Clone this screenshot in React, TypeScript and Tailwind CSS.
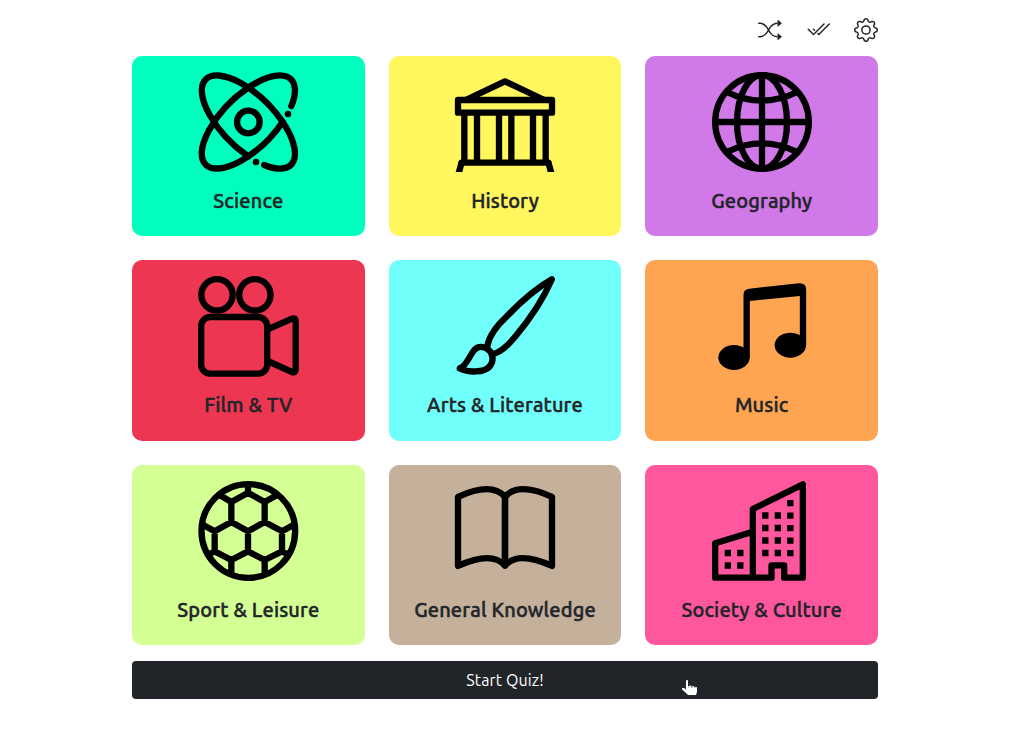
import React from "react";
import { BsShuffle, BsCheck2All, BsGear } from "react-icons/bs";

type Category = {
  name: string;
  color: string;
  viewBox: string;
  art: React.ReactNode;
};

const categories: Category[] = [
  {
    name: "Science",
    color: "bg-[#00ffbd]",
    viewBox: "198 48 300 300",
    art: (
      <>
        <path d="M451.9 198A181 79.5 -45 1 1 478 150.4" />
        <path d="M349 300.9A181 79.5 45 1 1 396.6 327" />
        <circle cx="349" cy="198" r="34" />
        <circle cx="468" cy="174" r="10" fill="currentColor" stroke="none" />
        <circle cx="372" cy="318" r="10" fill="currentColor" stroke="none" />
      </>
    ),
  },
  {
    name: "History",
    color: "bg-[#fff75d]",
    viewBox: "201 48 300 300",
    art: (
      <>
        <path d="M233 132L351 76L469 132" strokeLinecap="butt" />
        <rect x="210" y="132" width="282" height="38" />
        <path
          d="M229 170V320M267 170V320M333 170V320M370 170V320M435 170V320M473 170V320"
          strokeLinecap="butt"
        />
        <path d="M221 320H481" />
        <path
          d="M203 348L212 316L221 311L230 322L223 348ZM499 348L490 316L481 311L472 322L479 348Z"
          fill="currentColor"
          stroke="none"
        />
      </>
    ),
  },
  {
    name: "Geography",
    color: "bg-[#d279e9]",
    viewBox: "203.5 48 300 300",
    art: (
      <>
        <circle cx="353.5" cy="198" r="140.5" />
        <ellipse cx="353.5" cy="198" rx="75" ry="140.5" />
        <path d="M353.5 58V338M213 198H494M248 108Q353 160 459 108M248 288Q353 236 459 288" />
      </>
    ),
  },
  {
    name: "Film & TV",
    color: "bg-[#ed3652]",
    viewBox: "198 48 300 300",
    art: (
      <>
        <circle cx="255" cy="104.5" r="47" />
        <circle cx="368.5" cy="104.5" r="47" />
        <rect x="207.5" y="171" width="198" height="170" rx="27" />
        <path d="M407 208L480 176Q491 172 491 184V328Q491 340 480 336L407 303" />
      </>
    ),
  },
  {
    name: "Arts & Literature",
    color: "bg-[#71fffc]",
    viewBox: "200.5 48 300 300",
    art: (
      <>
        <path d="M298 257C303 226 322 201 354 171C397 126 439 88 491 58C465 118 424 179 382 229C356 261 337 277 314 282" />
        <path d="M215 325C234 318 240 295 256 273C269 255 291 259 304 272C317 286 316 307 303 321C288 337 243 339 215 325Z" />
      </>
    ),
  },
  {
    name: "Music",
    color: "bg-[#ffa552]",
    viewBox: "203.5 48 300 300",
    art: (
      <g fill="currentColor" stroke="none">
        <ellipse cx="269.5" cy="292.5" rx="47" ry="37.5" />
        <ellipse cx="438.5" cy="255.5" rx="47" ry="37.5" />
        <path d="M298 293V104Q298 88 315 86L464 70Q486 69 486 89V256H467V108L317 123V293Z" />
      </g>
    ),
  },
  {
    name: "Sport & Leisure",
    color: "bg-[#d3ff94]",
    viewBox: "198 51 300 300",
    art: (
      <>
        <circle cx="349" cy="201" r="140.5" />
        <path
          strokeLinecap="butt"
          d="M348 60V86M348 86L298 114V174L348 202L398 174V114ZM298 114L264 94M398 114L434 94M298 174L248 202V262L298 288L348 262V202M398 174L450 202V262L398 288L348 262M248 202L214 183M450 202L484 183M248 262L228 273M450 262L470 273M298 288V332M398 288V332"
        />
      </>
    ),
  },
  {
    name: "General Knowledge",
    color: "bg-[#c4b09b]",
    viewBox: "201 50.5 300 300",
    art: (
      <>
        <path d="M210 98C263 74 320 62 351 98V304C320 268 263 281 210 305Z" />
        <path d="M492 98C439 74 382 62 351 98V304C382 268 439 281 492 305Z" />
      </>
    ),
  },
  {
    name: "Society & Culture",
    color: "bg-[#ff579d]",
    viewBox: "203.5 51 300 300",
    art: (
      <>
        <path d="M326 341V135L476 61V341H420V304H382V341H213V238L326 203" />
        <path
          strokeLinecap="butt"
          strokeDasharray="19 18.5"
          d="M438.5 108V277M401 145V277M363.5 145V277M288.5 257.5V314M251 257.5V314"
        />
      </>
    ),
  },
];

function CategoryCard({ name, color, viewBox, art }: Category) {
  return (
    <button
      type="button"
      className={`flex h-[180.4px] flex-col items-center rounded-[10px] pt-4 ${color}`}
    >
      <svg
        viewBox={viewBox}
        className="size-[100px] shrink-0 overflow-visible text-black"
        fill="none"
        stroke="currentColor"
        strokeWidth="19"
        strokeLinecap="round"
        strokeLinejoin="round"
      >
        {art}
      </svg>
      <span className="mt-[17px] text-[20px] leading-6 font-medium tracking-[0.15px] whitespace-nowrap [-webkit-text-stroke:0.45px_#212529]">
        {name}
      </span>
    </button>
  );
}

export default function App() {
  return (
    <main className="min-h-screen bg-white font-['Ubuntu','Noto_Sans',sans-serif] text-[#212529]">
      <div className="ml-[132px] flex w-[746px] flex-col">
        <header className="flex h-14 items-start justify-end gap-6 pt-[18px]">
          <BsShuffle size={24} />
          <BsCheck2All size={24} />
          <BsGear size={24} />
        </header>
        <section className="grid grid-cols-3 gap-6">
          {categories.map((category) => (
            <CategoryCard key={category.name} {...category} />
          ))}
        </section>
        <button
          type="button"
          className="relative mt-[15.8px] h-[38px] rounded-[4px] bg-[#212529] text-base leading-6 tracking-[0.12px] text-white"
        >
          Start Quiz!
          <svg viewBox="0 0 16 16" className="absolute top-[19px] left-[550px] size-4" fill="#fff">
            <path d="M4 1Q4 0 5 0T6 1V6H7.500V5.500H9V6.500H10.500V6H12V7H13.500V6.500L15 7.500V12L14 15H6L4 13L0 9.500V8H2L4 9.500Z" />
            <path d="M7 5v2.500M10 6v2M13 6.500v1.500" stroke="#212529" strokeWidth="0.5" />
          </svg>
        </button>
      </div>
    </main>
  );
}
